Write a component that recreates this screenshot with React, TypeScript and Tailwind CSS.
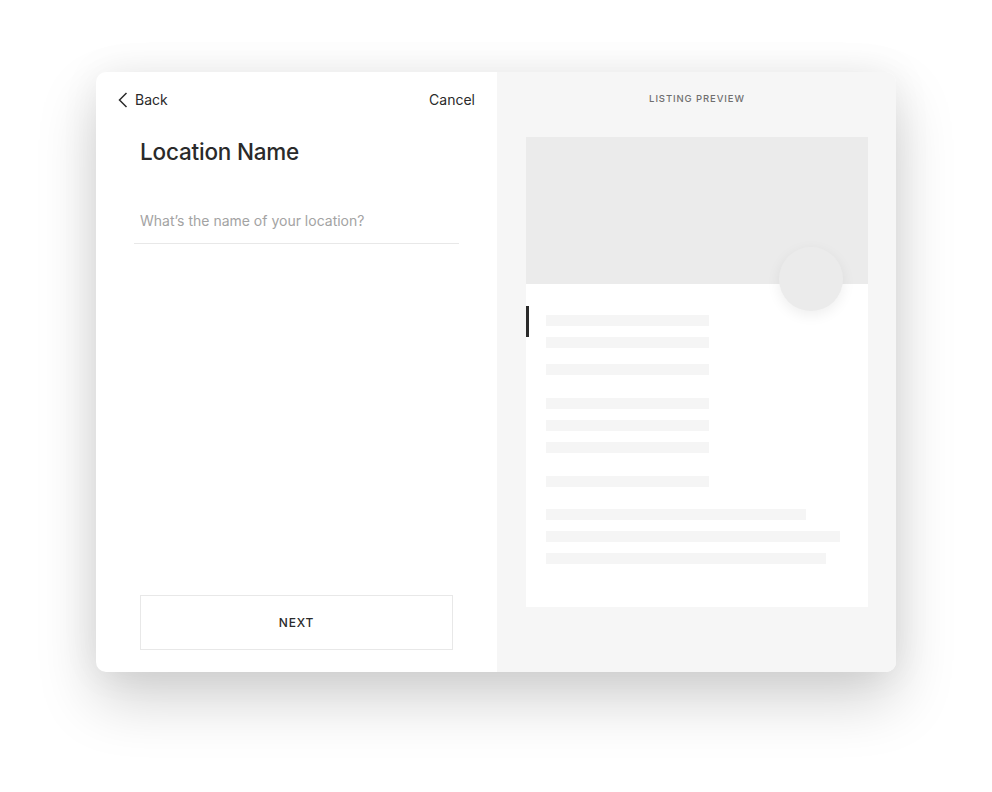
function Bar({ w, mt }: { w: string; mt: string }) {
  return <div className={`h-[11px] bg-[#f5f5f5] ${w} ${mt}`} />;
}

export default function App() {
  return (
    <div className="min-h-[792px] w-full bg-white pt-[72px] font-['Inter',sans-serif]">
      <div className="mx-auto flex h-[600px] w-[800px] overflow-hidden rounded-[10px] bg-white shadow-[0_28px_60px_rgba(0,0,0,0.18),0_0_40px_rgba(0,0,0,0.06)]">
        {/* form side */}
        <div className="flex w-[401px] shrink-0 flex-col px-[20px] pb-[22px]">
          <div className="flex h-[54px] items-center justify-between pt-[1px] pr-[2px] text-[14px] text-[#2a2a2a]">
            <button className="flex items-center gap-[7px] pl-[2px]">
              <svg width="10" height="16" viewBox="0 0 10 16" fill="none" stroke="currentColor" strokeWidth="1.5">
                <polyline points="8.5,1 1.5,8 8.5,15" />
              </svg>
              <span>Back</span>
            </button>
            <button>Cancel</button>
          </div>
          <h1 className="mt-[12px] pl-[24px] text-[22.5px] leading-[28px] font-medium tracking-[-0.2px] text-[#2a2a2a]">
            Location Name
          </h1>
          <div className="mt-[45px] ml-[18px] w-[325px] border-b border-[#e8e8e8] pb-[12px] pl-[6px] text-[14px] leading-[20px] text-[#a3a3a3]">
            What’s the name of your location?
          </div>
          <div className="flex-1" />
          <button className="ml-[24px] flex h-[55px] w-[313px] items-center justify-center border border-[#e8e8e8] text-[12px] font-medium tracking-[0.8px] text-[#2a2a2a]">
            NEXT
          </button>
        </div>

        {/* preview side */}
        <div className="flex flex-1 flex-col bg-[#f6f6f6] px-[29px]">
          <div className="flex h-[55px] items-center justify-center text-[9.5px] font-medium tracking-[0.9px] text-[#6f6f6f]">
            LISTING PREVIEW
          </div>
          <div className="mt-[10px] h-[470px] w-[342px] bg-white">
            <div className="relative h-[147px] bg-[#ebebeb]">
              <div className="absolute left-[253px] top-[110px] h-[64px] w-[64px] rounded-full bg-[#ebebeb] shadow-[0_4px_14px_rgba(0,0,0,0.07)]" />
            </div>
            <div className="relative px-[20px] pt-[31px]">
              <div className="absolute left-0 top-[22px] h-[31px] w-[3px] bg-[#2a2a2a]" />
              <Bar w="w-[163px]" mt="mt-0" />
              <Bar w="w-[163px]" mt="mt-[11px]" />
              <Bar w="w-[163px]" mt="mt-[16px]" />
              <Bar w="w-[163px]" mt="mt-[23px]" />
              <Bar w="w-[163px]" mt="mt-[11px]" />
              <Bar w="w-[163px]" mt="mt-[11px]" />
              <Bar w="w-[163px]" mt="mt-[23px]" />
              <Bar w="w-[260px]" mt="mt-[22px]" />
              <Bar w="w-[294px]" mt="mt-[11px]" />
              <Bar w="w-[280px]" mt="mt-[11px]" />
            </div>
          </div>
        </div>
      </div>
    </div>
  );
}
